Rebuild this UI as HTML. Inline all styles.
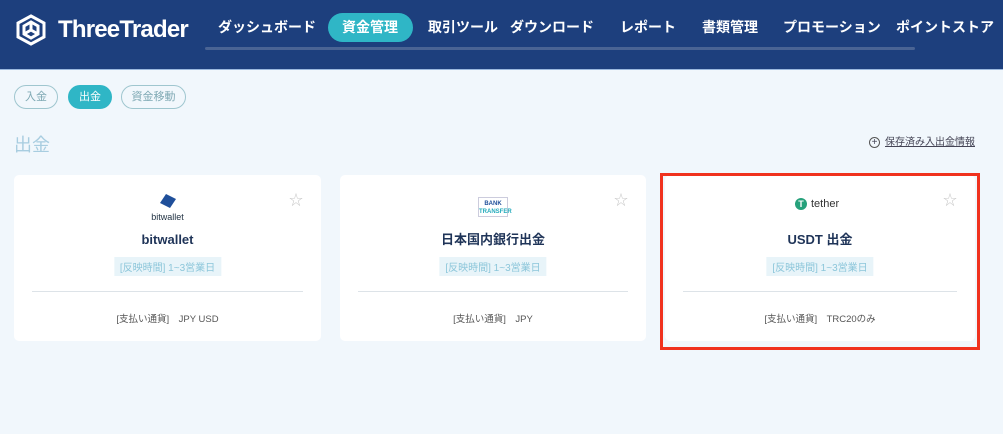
<!DOCTYPE html>
<html><head><meta charset="utf-8"><style>
*{margin:0;padding:0;box-sizing:border-box}
body{width:1003px;height:434px;background:#f1f7fc;font-family:"Liberation Sans","Noto Sans CJK JP",sans-serif;position:relative;overflow:hidden}
.hdr{position:absolute;left:0;top:0;width:1003px;height:70px;background:#1d3f7d;border-bottom:1px solid #9ab8de}
.logo{position:absolute;left:14px;top:13px;display:flex;align-items:center;color:#fff;font-weight:bold;font-size:24px;letter-spacing:-0.8px}
.nav{position:absolute;top:17px;color:#fff;font-size:14px;font-weight:bold}
.pill{position:absolute;left:328px;top:13px;width:85px;height:29px;border-radius:15px;background:#2fb6c6}
.uline{position:absolute;left:205px;top:47px;width:710px;height:3px;background:#4a6494;border-radius:2px}
.tab{position:absolute;top:85px;height:24px;border:1px solid #9fc6cf;border-radius:12px;font-size:11px;color:#7fa9b4;text-align:center;line-height:22px}
.card{position:absolute;top:175px;height:166px;background:#fff;border-radius:5px}
.card .t{position:absolute;top:57px;width:100%;text-align:center;font-size:13px;line-height:16px;font-weight:bold;color:#1f3458}
.card .b{position:absolute;top:82px;left:50%;transform:translateX(-50%);background:#e8f4f9;color:#8cc6da;font-size:10px;padding:2px 6px;white-space:nowrap}
.card .s{position:absolute;top:116px;left:18px;right:18px;height:1px;background:#dde3e8}
.card .p{position:absolute;top:136px;width:100%;text-align:center;font-size:9.5px;color:#555}
.star{position:absolute;top:15px;right:18px;color:#c8c8c8;font-size:14px}
</style></head><body>
<div class="hdr">
<div class="logo"><svg width="34" height="34" viewBox="0 0 34 34"><g fill="none" stroke="#fff" stroke-width="3"><path d="M17 3 L30 10 L30 24 L17 31 L4 24 L4 10 Z"/><path d="M10 13 L17 9 L24 13 L24 21 L17 25 L10 21 Z"/><path d="M17 9 V17 L24 21 M17 17 L10 21"/></g></svg><span style="margin-left:10px">ThreeTrader</span></div>
<div class="pill"></div>
<div class="uline"></div>
<div class="nav" style="left:218px">ダッシュボード</div>
<div class="nav" style="left:342px">資金管理</div>
<div class="nav" style="left:428px">取引ツール</div>
<div class="nav" style="left:510px">ダウンロード</div>
<div class="nav" style="left:620px">レポート</div>
<div class="nav" style="left:702px">書類管理</div>
<div class="nav" style="left:783px">プロモーション</div>
<div class="nav" style="left:896px">ポイントストア</div>
</div>
<div class="tab" style="left:14px;width:44px">入金</div>
<div class="tab" style="left:68px;width:44px;background:#2fb6c6;border-color:#2fb6c6;color:#fff">出金</div>
<div class="tab" style="left:121px;width:65px">資金移動</div>
<div style="position:absolute;left:14px;top:131px;font-size:18px;color:#a8cde0">出金</div>
<div style="position:absolute;left:869px;top:133px;font-size:10px;color:#445;"><span style="display:inline-block;width:11px;height:11px;border:1px solid #555;border-radius:50%;text-align:center;line-height:9px;font-size:10px;margin-right:5px">+</span><span style="text-decoration:underline">保存済み入出金情報</span></div>

<div class="card" style="left:14px;width:307px">
<svg style="position:absolute;left:144px;top:18px" width="20" height="16" viewBox="0 0 20 16"><path d="M8 1 L18 6 L12 15 L2 10 Z" fill="#1f4f9a"/></svg>
<div style="position:absolute;top:37px;width:100%;text-align:center;font-size:9px;color:#234">bitwallet</div>
<div class="star">☆</div>
<div class="t">bitwallet</div><div class="b">[反映時間] 1~3営業日</div><div class="s"></div><div class="p">[支払い通貨]　JPY USD</div></div>

<div class="card" style="left:340px;width:306px">
<div style="position:absolute;left:138px;top:22px;width:30px;height:20px;border:1px solid #ccd;font-size:6px;color:#1f4f9a;font-weight:bold;text-align:center;line-height:8px;padding-top:2px">BANK<br><span style="color:#2ab">TRANSFER</span></div>
<div class="star">☆</div>
<div class="t">日本国内銀行出金</div><div class="b">[反映時間] 1~3営業日</div><div class="s"></div><div class="p">[支払い通貨]　JPY</div></div>

<div class="card" style="left:665px;width:310px;top:175px">
<div style="position:absolute;left:130px;top:23px;display:flex;align-items:center;font-size:11px;color:#333"><span style="display:inline-block;width:12px;height:12px;border-radius:50%;background:#26a17b;color:#fff;font-size:9px;font-weight:bold;text-align:center;line-height:12px;margin-right:4px">T</span>tether</div>
<div class="star">☆</div>
<div class="t">USDT 出金</div><div class="b">[反映時間] 1~3営業日</div><div class="s"></div><div class="p">[支払い通貨]　TRC20のみ</div></div>
<div style="position:absolute;left:660px;top:173px;width:320px;height:177px;border:3px solid #f0321e"></div>
</body></html>
